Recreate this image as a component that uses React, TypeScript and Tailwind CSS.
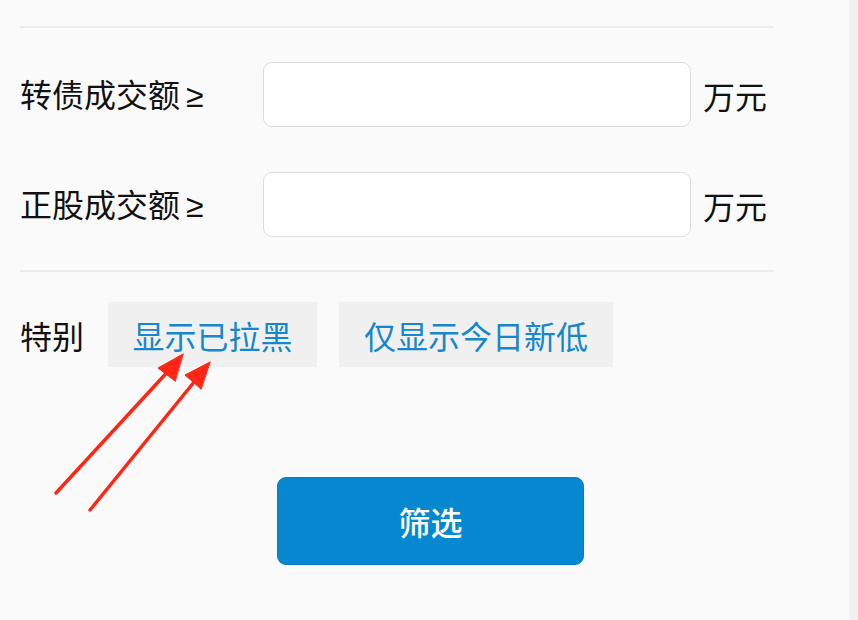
export default function App() {
  const font = { fontFamily: '"Noto Sans CJK SC", "Noto Sans", sans-serif' };
  return (
    <div
      className="w-[858px] h-[620px] overflow-hidden relative bg-[#fafafa] flex"
      style={font}
    >
      <div className="w-[849px] h-full flex flex-col pl-[20px]">
        <div className="mt-[26px] h-[2px] w-[754px] bg-[#ececec]" />

        <div className="mt-[34px] h-[65px] flex items-center">
          <span className="w-[243px] text-[32px] leading-none text-[#111]">
            转债成交额<span className="ml-[6px] font-['Liberation_Sans']">≥</span>
          </span>
          <div className="w-[428px] h-[65px] bg-white border border-[#dcdcdc] rounded-[9px]" />
          <span className="ml-[12px] text-[32px] leading-none text-[#111]">万元</span>
        </div>

        <div className="mt-[45px] h-[65px] flex items-center">
          <span className="w-[243px] text-[32px] leading-none text-[#111]">
            正股成交额<span className="ml-[6px] font-['Liberation_Sans']">≥</span>
          </span>
          <div className="w-[428px] h-[65px] bg-white border border-[#dcdcdc] rounded-[9px]" />
          <span className="ml-[12px] text-[32px] leading-none text-[#111]">万元</span>
        </div>

        <div className="mt-[33px] h-[2px] w-[754px] bg-[#ececec]" />

        <div className="mt-[30px] h-[65px] flex items-center">
          <span className="w-[88px] text-[32px] leading-none text-[#111]">特别</span>
          <div className="w-[209px] h-[65px] bg-[#f0f0f0] flex items-center justify-center text-[32px] leading-none text-[#1787c9]">
            显示已拉黑
          </div>
          <div className="ml-[22px] w-[274px] h-[65px] bg-[#f0f0f0] flex items-center justify-center text-[32px] leading-none text-[#1787c9]">
            仅显示今日新低
          </div>
        </div>

        <div className="mt-[110px] ml-[257px] w-[307px] h-[88px] rounded-[9px] bg-[#0688d0] border border-[#0a7cc0] flex items-center justify-center text-[32px] font-medium leading-none text-white">
          筛选
        </div>
      </div>
      <div className="flex-1 h-full bg-[#f1f1f1]" />

      <svg className="absolute inset-0 pointer-events-none" width="858" height="620" viewBox="0 0 858 620">
        <g fill="#ff2616" stroke="#ff2616" strokeLinecap="round">
          <line x1="56" y1="493" x2="172" y2="367" strokeWidth="3.5" />
          <polygon points="183,354 158,368 175,381" strokeWidth="1" strokeLinejoin="round" />
          <line x1="90" y1="510" x2="199" y2="376" strokeWidth="3.5" />
          <polygon points="210,362 185,375 201,389" strokeWidth="1" strokeLinejoin="round" />
        </g>
      </svg>
    </div>
  );
}
